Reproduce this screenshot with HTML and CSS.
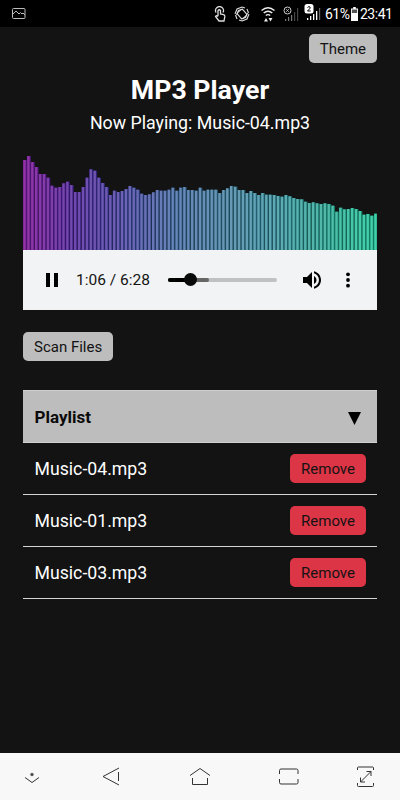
FILE: index.html
```html
<!DOCTYPE html>
<html lang="en">
<head>
    <meta charset="UTF-8">
    <meta name="viewport" content="width=device-width, initial-scale=1.0">
    <title>MP3 Player</title>
    <link rel="stylesheet" href="styles.css">
</head>
<body>
    <div class="statusbar">
        <svg class="picture" width="14" height="11" viewBox="0 0 14 11" fill="none" stroke="#bbb">
            <rect x=".5" y=".5" width="12.5" height="10" rx="1"/>
            <path d="M1 6l3-3 3 3 1.500-1.500L10 6l1-1 2 2"/>
        </svg>
        <svg width="12" height="16" viewBox="0 0 12 16" fill="none" stroke="#ddd" stroke-width="1.300">
            <path d="M2 6.500a4 4 0 1 1 7 0M4 10V4.500q1.300-1.500 2.500 0V8l3 .7q1.500.5 1.300 2L10 15H5L1.500 10.500q1-1.500 2.500 0"/>
        </svg>
        <svg class="rotate" width="16" height="16" viewBox="0 0 16 16" fill="none" stroke="#ddd" stroke-width="1.100">
            <rect x="4.500" y="4" width="7" height="8" rx="1.500" transform="rotate(-40 8 8)"/>
            <path d="M1 8l2-5 5-2 3 1M2.500 9l2-4.500L9 3M15 8l-2 5-5 2-3-1M13.500 7l-2 4.500L7 13M13 3l1.500 4M3 13L1.500 9"/>
        </svg>
        <svg class="wifi" width="14" height="16" viewBox="0 0 14 16" fill="none" stroke="#eee" stroke-width="1.400">
            <path d="M.5 4.500q6.500-5.500 13 0M2.700 7q4.300-3.700 8.600 0M4.800 9.500q2.200-1.800 4.400 0"/>
            <path d="M3 15.500l2-3.500 2 3.500zM7.500 12h4l-2 3.500z" fill="#eee" stroke="none"/>
        </svg>
        <svg class="sim1" width="17" height="16" viewBox="0 0 17 16">
            <path d="M2 13h1.200v2H2zM5 11h1.200v4H5zM8 9h1.200v6H8z" fill="#777"/>
            <path d="M11 6h1.200v9H11zM14 2h1.200v13H14z" fill="#444"/>
            <circle cx="4.500" cy="4.500" r="3.500" fill="#000" stroke="#ccc"/>
            <path d="M3.300 3.300l2.400 2.400M5.700 3.300L3.300 5.700" stroke="#ccc"/>
        </svg>
        <svg class="sim2" width="17" height="17" viewBox="0 0 17 17">
            <path d="M3 14h1.300v2H3zM6 12h1.300v4H6zM9 10h1.300v6H9zM12 7h1.300v9H12z" fill="#fff"/>
            <path d="M15 4h1.200v12H15z" fill="#666"/>
            <rect x=".500" y="0" width="9" height="9.500" rx="2.500" fill="#fff"/>
            <path d="M3.500 3.500q1.500-1.800 2.700-.3.500 1-2.700 3.800h3.200" fill="none" stroke="#000"/>
        </svg>
        <span class="percent">61%</span>
        <svg class="battery" width="7" height="14" viewBox="0 0 8 14" preserveAspectRatio="none">
            <path d="M2.500 0h3v1.500H8V14H0V1.500h2.500z" fill="#fff"/>
            <path d="M1 2.500h6V6H1z" fill="#555"/>
        </svg>
        <span class="clock">23:41</span>
    </div>

    <div class="container">
        <div class="top">
            <button class="btn">Theme</button>
        </div>
        <h1>MP3 Player</h1>
        <p class="now">Now Playing: Music-04.mp3</p>
        <canvas id="visualizer" width="354" height="100"></canvas>
        <div class="player">
            <svg class="pause" width="12" height="14" viewBox="0 0 12 14">
                <path d="M0 0h4v14H0zM8 0h4v14H8z"/>
            </svg>
            <span class="time">1:06 / 6:28</span>
            <div class="track">
                <div class="buffered"></div>
                <div class="played"></div>
                <div class="thumb"></div>
            </div>
            <svg class="volume" width="18" height="18" viewBox="3 3 18 18">
                <path d="M3 9v6h4l5 5V4L7 9H3zm13.500 3c0-1.770-1.020-3.290-2.500-4.030v8.050c1.480-.73 2.500-2.250 2.500-4.020zM14 3.230v2.060c2.890.86 5 3.540 5 6.710s-2.110 5.850-5 6.710v2.060c4.010-.91 7-4.490 7-8.770s-2.990-7.860-7-8.770z"/>
            </svg>
            <svg class="more" width="4" height="16" viewBox="0 0 4 16">
                <circle cx="2" cy="2.300" r="1.900"/>
                <circle cx="2" cy="8" r="1.900"/>
                <circle cx="2" cy="13.700" r="1.900"/>
            </svg>
        </div>
        <button class="btn">Scan Files</button>

        <div class="playlist">
            <div class="playlist-header">
                <span>Playlist</span>
                <svg width="13" height="13" viewBox="0 0 13 13"><path d="M0 0h13L6.500 13z"/></svg>
            </div>
            <div class="item"><span>Music-04.mp3</span><button class="btn remove">Remove</button></div>
            <div class="item"><span>Music-01.mp3</span><button class="btn remove">Remove</button></div>
            <div class="item"><span>Music-03.mp3</span><button class="btn remove">Remove</button></div>
        </div>
    </div>

    <div class="navbar">
        <svg width="400" height="47" viewBox="0 0 400 47" fill="none" stroke="#333">
            <path d="M25 24.500l7 5 7-5"/>
            <circle cx="32" cy="21.500" r="1.700" fill="#555" stroke="none"/>
            <path d="M119 15l-16 8.500 16 8.500M118.500 19v9"/>
            <path d="M190 22.500l10-7 10 7M192.500 25v6.500h15V25"/>
            <path d="M279.500 21v-3.500q0-1.500 1.500-1.500h15.500q1.500 0 1.500 1.500V21M279.500 26v3.500q0 1.500 1.500 1.500h15.500q1.500 0 1.500-1.500V26"/>
            <path d="M357.500 17v-2q0-1 1-1h14q1 0 1 1v2M357.500 30v2.500q0 1 1 1h14q1 0 1-1V30M360.500 29l10.500-10.500M366.500 18.500h4.500V23M360.500 24.500V29h4.500"/>
        </svg>
    </div>

    <script>
        const canvas = document.getElementById('visualizer');
        const ctx = canvas.getContext('2d');
        const levels = [
            90, 94, 88, 83, 76, 76, 72.3, 64.3, 62.3, 63, 66.7, 68.3, 65, 58, 58, 63, 72.3, 80.7, 79.3, 72.3,
            67, 63, 55, 59.3, 58, 59, 61, 64, 62.3, 60.3, 56.3, 55, 55.7, 57.7, 60, 59.3, 59.3, 60.3, 62.3, 59.3,
            62.3, 63, 60, 60, 59.3, 62.3, 59.3, 60.3, 60.3, 60.3, 57, 60, 61.7, 64, 63.3, 60, 60, 57, 59, 57,
            55, 57, 55.3, 55.3, 55, 54, 53.3, 55, 53.7, 52, 51, 50.7, 48.3, 47, 47.7, 46.7, 46, 46.7, 46, 44.3,
            38.3, 42.3, 40.7, 41, 42, 41, 39, 35.3, 36, 34.3, 36.3
        ];
        const step = 3.9;

        function makeGradient(colors) {
            const g = ctx.createLinearGradient(0, 0, canvas.width, 0);
            colors.forEach((c, i) => g.addColorStop(i / (colors.length - 1), c));
            return g;
        }

        const light = makeGradient(['#9331a4', '#7049ae', '#6c63b4', '#6784b8', '#6798b6', '#5eaab5', '#4fb9a8', '#42d3ac']);
        const dark = makeGradient(['#5b1580', '#311873', '#283279', '#204565', '#24566a', '#20626c', '#167565', '#108063']);

        levels.forEach((h, i) => {
            const x = i * step;
            ctx.fillStyle = dark;
            ctx.fillRect(x, canvas.height - h, step, h);
            ctx.fillStyle = light;
            ctx.fillRect(x + 0.3, canvas.height - h, 2.4, h);
        });
    </script>
</body>
</html>
```

FILE: styles.css
```css
* {
    box-sizing: border-box;
}
body {
    margin: 0;
    height: 800px;
    display: flex;
    flex-direction: column;
    background-color: #131313;
    color: #fff;
    font-family: Roboto, sans-serif;
    overflow: hidden;
}
svg, canvas {
    display: block;
    flex-shrink: 0;
}

/* status bar */
.statusbar {
    height: 27px;
    padding: 0 7px 0 12px;
    display: flex;
    align-items: center;
    background-color: #000;
    font-size: 14px;
}
.picture {
    margin-right: auto;
}
.rotate {
    margin-left: 8px;
}
.wifi {
    margin-left: 11px;
}
.sim1 {
    margin-left: 8px;
}
.sim2 {
    margin: 0 4px 3px 4px;
}
.percent {
    width: 26px;
    white-space: nowrap;
    letter-spacing: -0.5px;
}
.battery {
    margin-right: 2px;
}
.clock {
    width: 33px;
    letter-spacing: -0.5px;
}

.container {
    flex: 1;
    padding: 7px 23px 0;
}
.top {
    display: flex;
    justify-content: flex-end;
}
.btn {
    display: block;
    height: 29px;
    padding: 0 11px;
    border: none;
    border-radius: 5px;
    background-color: #bdbdbd;
    color: #131313;
    font-family: inherit;
    font-size: 15px;
    cursor: pointer;
}
h1 {
    margin: 9px 0 0;
    font-size: 26.7px;
    line-height: 36px;
    text-align: center;
}
.now {
    margin: 4px 0 16px;
    font-size: 17.8px;
    line-height: 22px;
    text-align: center;
}

/* audio controls */
.player {
    height: 60px;
    margin-bottom: 22px;
    padding: 0 27px 0 23px;
    display: flex;
    align-items: center;
    background-color: #f1f3f4;
    color: #131313;
}
.time {
    width: 75px;
    margin: 0 17px 0 18px;
    font-size: 15.5px;
    white-space: nowrap;
}
.track {
    position: relative;
    width: 109px;
    height: 4px;
    margin-right: 26px;
    border-radius: 2px;
    background-color: #c0c1c2;
}
.buffered, .played {
    position: absolute;
    left: 0;
    top: 0;
    height: 4px;
    border-radius: 2px;
}
.buffered {
    width: 41px;
    background-color: #666;
}
.played {
    width: 23px;
    background-color: #000;
}
.thumb {
    position: absolute;
    left: 16px;
    top: -5px;
    width: 13px;
    height: 13px;
    border-radius: 50%;
    background-color: #0a0a0a;
}
.more {
    margin-left: auto;
}

/* playlist */
.playlist {
    margin-top: 29px;
}
.playlist-header {
    height: 53px;
    padding: 0 16px 0 11.5px;
    display: flex;
    align-items: center;
    justify-content: space-between;
    background-color: #bdbdbd;
    border: 1px solid #cfcfcf;
    border-width: 1px 0;
    color: #0b0b0b;
    font-size: 17px;
    font-weight: bold;
}
.playlist-header svg {
    margin-top: 4px;
}
.item {
    height: 52px;
    padding: 0 11px 0 11.5px;
    display: flex;
    align-items: center;
    justify-content: space-between;
    border-bottom: 1px solid #d5d5d5;
    font-size: 17.7px;
}
.remove {
    background-color: #dc3545;
}

.navbar {
    height: 47px;
    background-color: #f8f8f8;
}
```
